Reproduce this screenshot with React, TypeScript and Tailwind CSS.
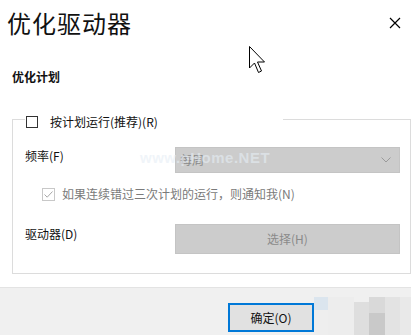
import React from "react";

function CloseIcon() {
  return (
    <svg width="12" height="12" viewBox="0 0 12 12" className="text-black">
      <path d="M1 1 L11 11 M11 1 L1 11" stroke="currentColor" strokeWidth="1.2" fill="none" />
    </svg>
  );
}

function Pointer() {
  return (
    <svg width="17" height="28" viewBox="0 0 17 28" className="absolute left-[249px] top-[46px]">
      <path
        d="M0.5 0.5 V22 L5.5 17 L9.5 26.5 L12.5 25 L8.5 16 H15.5 Z"
        fill="#fff"
        stroke="#000"
        strokeWidth="1"
        strokeLinejoin="miter"
      />
    </svg>
  );
}

function Chevron() {
  return (
    <svg width="10" height="6" viewBox="0 0 10 6">
      <path d="M0.5 0.5 L5 5 L9.5 0.5" stroke="#9a9a9a" strokeWidth="1" fill="none" />
    </svg>
  );
}

export default function App() {
  return (
    <div className="relative h-[335px] w-[411px] overflow-hidden bg-white text-[12px] text-[#111] font-['Noto_Sans_CJK_SC','Noto_Sans',sans-serif]">
      <div className="flex items-start justify-between pl-[7px] pr-[10px] pt-[11px]">
        <h1 className="text-[24px] leading-[24px] tracking-[1px] text-[#111]">优化驱动器</h1>
        <div className="mt-[6px]">
          <CloseIcon />
        </div>
      </div>

      <div className="mt-[34px] pl-[12px] font-bold leading-[16px]">优化计划</div>

      <fieldset className="mx-[12px] mt-[24px] h-[165px] w-[399px] border border-[#dcdcdc]">
        <legend className="ml-[12px] w-[258px] pt-[6px]">
          <div className="flex h-[14px] items-center">
            <span className="ml-[1px] h-[12px] w-[12px] border border-[#333]" />
            <span className="ml-[12px] leading-[14px]">按计划运行(推荐)(R)</span>
          </div>
        </legend>

        <div className="pl-[12px] pr-[10px]">
          <div className="mt-[18px] flex items-start">
            <span className="mt-[1px] w-[150px] leading-[16px]">频率(F)</span>
            <div className="flex h-[26px] flex-1 items-center justify-between border border-[#c4c4c4] bg-[#cccccc] pl-[4px] pr-[8px]">
              <span className="text-[#8a8a8a]">每周</span>
              <Chevron />
            </div>
          </div>

          <div className="mt-[13px] flex h-[16px] items-center pl-[17px]">
            <span className="relative h-[13px] w-[13px] border border-[#c8c8c8]">
              <svg width="11" height="11" viewBox="0 0 11 11" className="absolute left-0 top-0">
                <path d="M1.5 5.5 L4.2 8.2 L9.5 2.5" stroke="#a8a8a8" strokeWidth="1" fill="none" />
              </svg>
            </span>
            <span className="ml-[7px] leading-[16px] text-[#7a7a7a]">如果连续错过三次计划的运行，则通知我(N)</span>
          </div>

          <div className="mt-[22px] flex items-start">
            <span className="mt-[2px] w-[150px] leading-[16px]">驱动器(D)</span>
            <div className="flex h-[30px] flex-1 items-center justify-center border border-[#c4c4c4] bg-[#cccccc] text-[#8a8a8a]">
              选择(H)
            </div>
          </div>
        </div>
      </fieldset>

      <div className="mt-[13px] flex h-[49px] items-start border-t border-[#e3e3e3] bg-[#f0f0f0]">
        <div className="ml-[228px] mt-[15px] flex h-[29px] w-[86px] items-center justify-center border-2 border-[#0078d7] bg-[#e1e1e1]">
          确定(O)
        </div>
        <div className="mt-[9px] flex h-[39px] flex-1">
          <div className="flex w-[14px] flex-col">
            <div className="h-[13px] bg-[#dbe5ee]" />
            <div className="flex-1 bg-[#eeeeee]" />
          </div>
          <div className="w-[26px] bg-[#ededed]" />
          <div className="flex w-[15px] flex-col">
            <div className="h-[5px] bg-[#f0f0f0]" />
            <div className="flex-1 bg-[#dedede]" />
          </div>
          <div className="flex w-[16px] flex-col">
            <div className="h-[16px] bg-[#d9d9d9]" />
            <div className="flex-1 bg-[#c9c9c9]" />
          </div>
          <div className="w-[15px] bg-[#e3e3e3]" />
          <div className="flex-1 bg-[#e9e9e9]" />
        </div>
      </div>

      <span className="absolute left-[140px] top-[149px] text-[15px] font-bold leading-[18px] tracking-[0.5px] text-[#e6eef5]/60 font-['Liberation_Sans',sans-serif]">
        www.pHome.NET
      </span>
      <Pointer />
    </div>
  );
}
